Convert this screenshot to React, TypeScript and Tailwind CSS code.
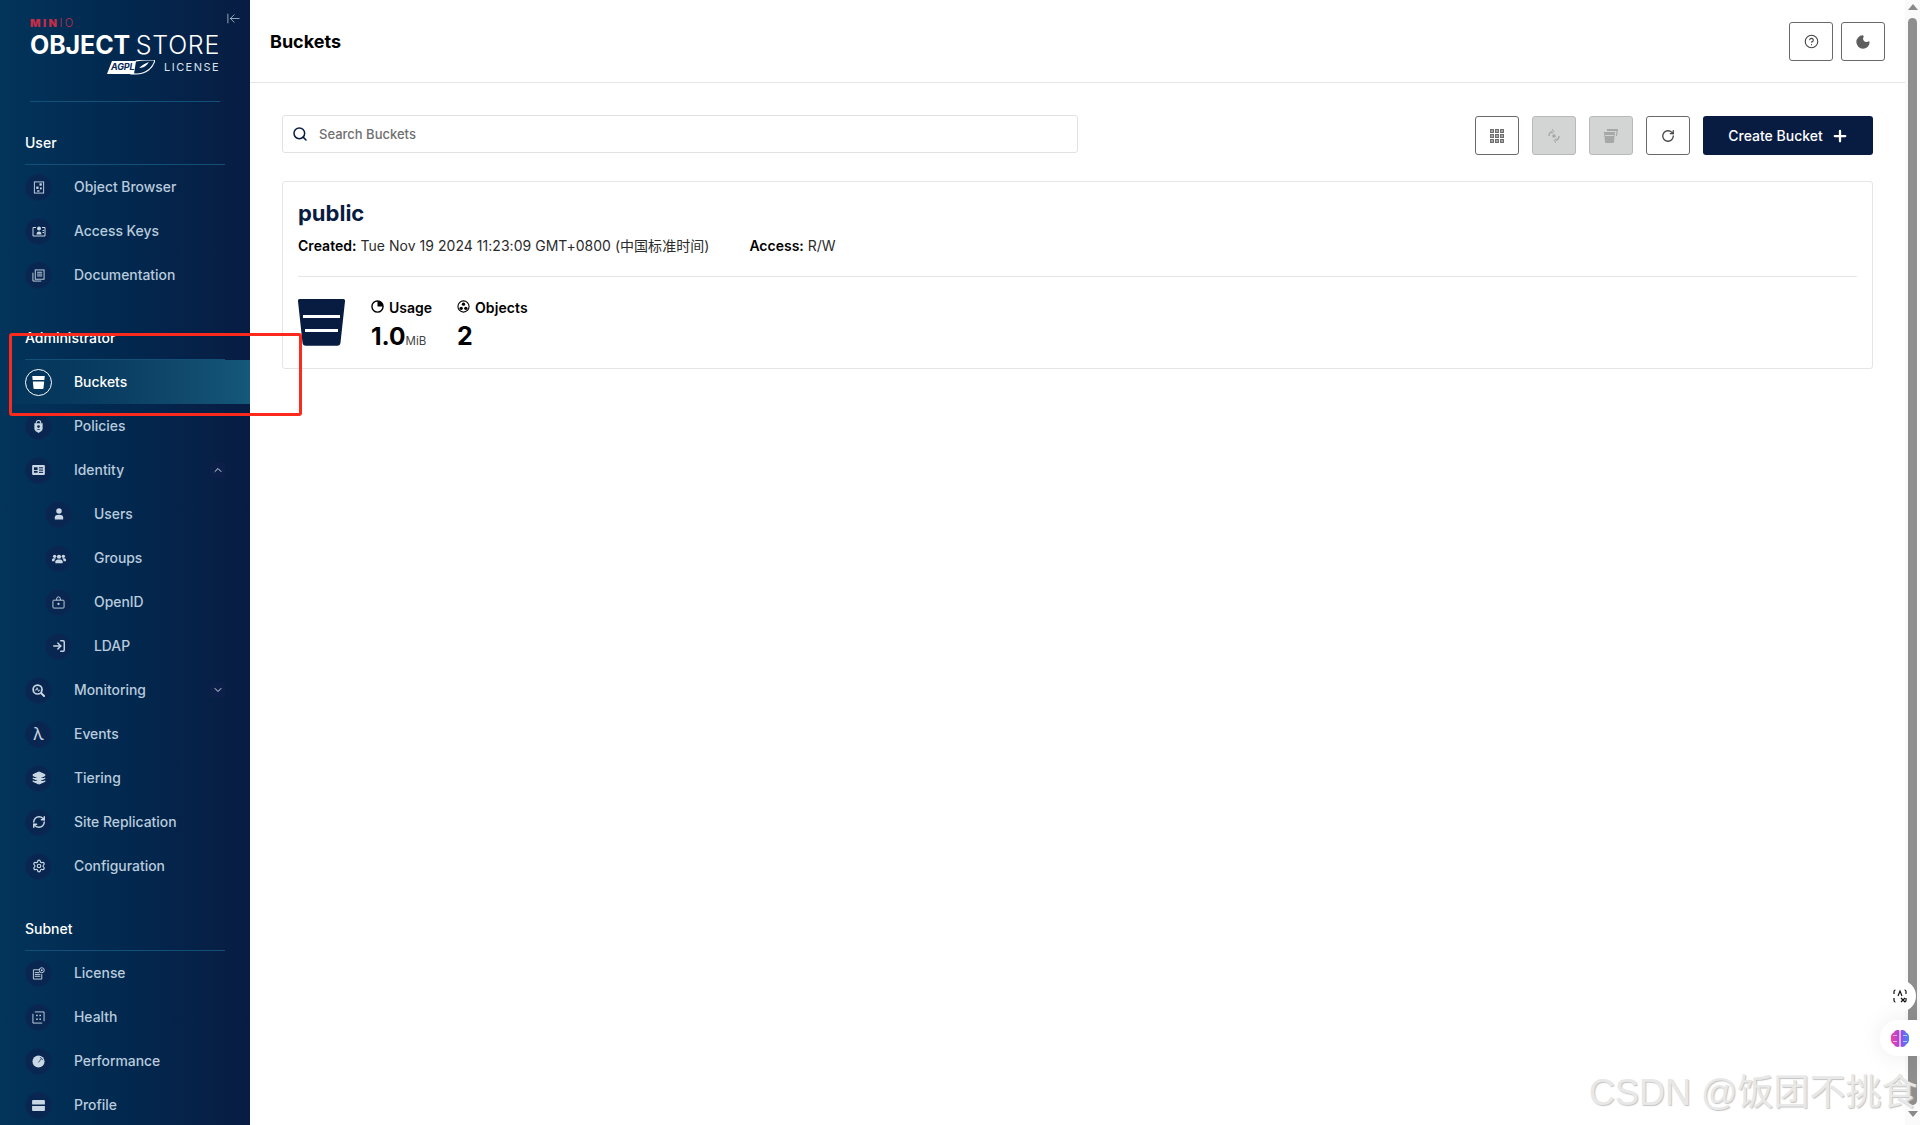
import React from 'react';
import { ArrowLeftToLine, ChevronDown, ChevronUp, CircleHelp, Layers, LogIn, Moon, Plus, RefreshCw, RotateCw, Search, Settings } from 'lucide-react';

type IconProps = { className?: string };

const ObjectBrowserIcon = ({ className }: IconProps) => (
    <svg viewBox="0 0 12 14" className={className} fill="none" stroke="currentColor" strokeWidth="1">
        <rect x="1" y="1" width="10" height="12" />
        <rect x="6.5" y="2.5" width="2.5" height="2.5" fill="currentColor" stroke="none" />
        <rect x="3" y="6" width="2.5" height="2.5" fill="currentColor" stroke="none" />
        <rect x="7" y="7" width="2" height="2" fill="currentColor" stroke="none" />
        <rect x="4" y="10" width="2.5" height="1.5" fill="currentColor" stroke="none" />
    </svg>
);

const AccessKeysIcon = ({ className }: IconProps) => (
    <svg viewBox="0 0 14 12" className={className} fill="none" stroke="currentColor" strokeWidth="1">
        <path d="M4 2.5H1v8.5h12V2.5h-3" />
        <circle cx="7" cy="3.5" r="2" fill="currentColor" stroke="none" />
        <path d="M4.5 9.5C4.5 7.5 5.5 6.5 7 6.5s2.5 1 2.5 3z" fill="currentColor" stroke="none" />
        <path d="M10.5 5.5h1.5M10.5 7.5h1.5" />
    </svg>
);

const DocumentationIcon = ({ className }: IconProps) => (
    <svg viewBox="0 0 14 14" className={className} fill="none" stroke="currentColor" strokeWidth="1">
        <rect x="3.5" y="1" width="9.5" height="10" />
        <path d="M1 4v9h9M5.5 3.5h5.5M5.5 5.5h5.5M5.5 7.5h5.5" />
    </svg>
);

const BucketIcon = ({ className }: IconProps) => (
    <svg viewBox="0 0 48 48" className={className} fill="currentColor">
        <path d="M2 0h44a2 2 0 0 1 2 2.2l-4.6 42.6a3.4 3.4 0 0 1-3.4 3H8a3.4 3.4 0 0 1-3.4-3L0 2.2A2 2 0 0 1 2 0z" />
    </svg>
);

const PoliciesIcon = ({ className }: IconProps) => (
    <svg viewBox="0 0 12 14" className={className}>
        <path d="M3.5 4V3a2.5 2.5 0 0 1 5 0v1" fill="none" stroke="currentColor" strokeWidth="1.2" />
        <path d="M1.5 3.5h9v6c0 2-2.5 3.5-4.5 4.500-2-1-4.500-2.500-4.500-4.500z" fill="currentColor" />
        <circle cx="6" cy="7" r="1.5" fill="#08264f" />
        <path d="M4 10.500c.5-1 3.500-1 4 0z" fill="#08264f" />
    </svg>
);

const IdentityIcon = ({ className }: IconProps) => (
    <svg viewBox="0 0 14 11" className={className}>
        <rect x="0" y="0" width="14" height="11" rx="1.2" fill="currentColor" />
        <rect x="2" y="2.500" width="4" height="3" fill="#08264f" />
        <rect x="2" y="6.500" width="4" height="2" fill="#08264f" />
        <rect x="7.500" y="2.500" width="4.500" height="1.200" fill="#08264f" />
        <rect x="7.500" y="5" width="4.500" height="1.200" fill="#08264f" />
        <rect x="7.500" y="7.500" width="4.500" height="1.200" fill="#08264f" />
    </svg>
);

const UserIcon = ({ className }: IconProps) => (
    <svg viewBox="0 0 12 14" className={className} fill="currentColor">
        <circle cx="6" cy="3.500" r="3.300" />
        <path d="M1 13.500V11c0-2 2-3 5-3s5 1 5 3v2.500z" />
    </svg>
);

const GroupsIcon = ({ className }: IconProps) => (
    <svg viewBox="0 0 16 12" className={className} fill="currentColor">
        <circle cx="8" cy="4" r="2.400" />
        <circle cx="3" cy="3.500" r="1.900" />
        <circle cx="13" cy="3.500" r="1.900" />
        <path d="M3.800 11.500V9.500c0-1.800 1.800-2.500 4.200-2.500s4.200.7 4.200 2.500v2z" />
        <path d="M0 9V7.500C0 6 1.500 5.800 3 5.800c.6 0 1 .1 1.400.2C3.300 6.700 2.800 7.700 2.800 9zM16 9V7.500C16 6 14.500 5.800 13 5.800c-.6 0-1 .1-1.400.2 1.100.7 1.600 1.700 1.600 3z" />
    </svg>
);

const OpenIdIcon = ({ className }: IconProps) => (
    <svg viewBox="0 0 14 14" className={className} fill="none" stroke="currentColor" strokeWidth="1">
        <path d="M5 4.500V3a2 2 0 0 1 4 0v1.500" />
        <rect x="1" y="4.500" width="12" height="8.500" rx="1" />
        <circle cx="7" cy="8.500" r="1.200" fill="currentColor" stroke="none" />
    </svg>
);

const MonitoringIcon = ({ className }: IconProps) => (
    <svg viewBox="0 0 14 14" className={className}>
        <circle cx="6" cy="6" r="4.800" fill="#08264f" stroke="currentColor" strokeWidth="1.800" />
        <path d="M3 6.500h1.500l1-2.500 1.500 4 1-1.500h1" fill="none" stroke="currentColor" strokeWidth="1" />
        <path d="M10 10l3 3" stroke="currentColor" strokeWidth="2.200" strokeLinecap="round" />
    </svg>
);

const LicenseIcon = ({ className }: IconProps) => (
    <svg viewBox="0 0 14 14" className={className} fill="none" stroke="currentColor" strokeWidth="1">
        <path d="M8 3H1.500v10h9V7.500M3 6h5M3 8h6M3 10h6" />
        <circle cx="10.500" cy="3.500" r="2.700" />
        <circle cx="10.500" cy="3.500" r="1" fill="currentColor" stroke="none" />
    </svg>
);

const HealthIcon = ({ className }: IconProps) => (
    <svg viewBox="0 0 14 14" className={className} fill="none" stroke="currentColor" strokeWidth="1">
        <path d="M3 1h10v10M1 3v10h10" />
        <rect x="4.500" y="4" width="1.600" height="1.600" fill="currentColor" stroke="none" />
        <rect x="8" y="4" width="1.600" height="1.600" fill="currentColor" stroke="none" />
        <rect x="4.500" y="8" width="1.600" height="1.600" fill="currentColor" stroke="none" />
        <rect x="8" y="8" width="1.600" height="1.600" fill="currentColor" stroke="none" />
    </svg>
);

const PerformanceIcon = ({ className }: IconProps) => (
    <svg viewBox="0 0 14 14" className={className}>
        <circle cx="7" cy="7" r="6.500" fill="currentColor" />
        <path d="M7 8l3-4M8.500 2.500a5 5 0 0 1 3 3" fill="none" stroke="#08264f" strokeWidth=".8" />
    </svg>
);

const ProfileIcon = ({ className }: IconProps) => (
    <svg viewBox="0 0 14 12" className={className} fill="currentColor">
        <path d="M1 0h12a1 1 0 0 1 1 1v4H0V1a1 1 0 0 1 1-1z" />
        <path d="M0 6.500h14V11a1 1 0 0 1-1 1H1a1 1 0 0 1-1-1z" />
    </svg>
);

const SidebarBucket = ({ className }: IconProps) => (
    <svg viewBox="0 0 14 14" className={className} fill="currentColor">
        <path d="M.3 0h13.400l-.4 4.300H.7z" />
        <path d="M.9 6h12.200l-.7 7a1 1 0 0 1-1 1H2.600a1 1 0 0 1-1-1z" />
    </svg>
);

const NavItem = ({ label, icon, sub, active, chevron }: { label: string; icon: React.ReactNode; sub?: boolean; active?: boolean; chevron?: 'up' | 'down' }) => (
    <div className={`relative flex h-[44px] items-center ${sub ? 'pl-[45px]' : 'pl-[25px]'} pr-[25px] ${active ? 'bg-gradient-to-r from-transparent to-[#14587a] text-white' : 'text-[#b9cbdd]'}`}>
        <div className={`flex h-[27px] w-[27px] shrink-0 items-center justify-center rounded-full ${active ? 'border border-white text-white' : 'border border-[#0a2a58] bg-[#08264f] text-[#c9d6e3]'}`}>
            {icon}
        </div>
        <span className="ml-[22px] text-[13.9px] font-medium leading-5">{label}</span>
        {chevron && (
            <div className="ml-auto flex h-[15px] w-[15px] items-center justify-center rounded-[2px] bg-[#0b1f49] text-[#d5e0ea]">
                {chevron === 'up' ? <ChevronUp className="h-[12px] w-[12px]" /> : <ChevronDown className="h-[12px] w-[12px]" />}
            </div>
        )}
    </div>
);

const SectionHeading = ({ title }: { title: string }) => (
    <div className="mx-[25px] flex h-[43px] items-center border-b border-[#125077] pb-px text-[14px] font-medium text-white">
        {title}
    </div>
);

const Sidebar = () => (
    <aside className="h-[1125px] w-[250px] shrink-0 overflow-hidden bg-gradient-to-r from-[#03345a] via-[#02284f] to-[#081c42]">
        <div className="relative h-[102px] px-[30px]">
            <div className="pt-[17px] text-[11px] font-black leading-[12px] tracking-[2.4px] text-[#c72c48]">
                MIN<span className="font-light">IO</span>
            </div>
            <div className="flex justify-between pt-[2px] text-[25px] leading-[29px] text-white">
                <span className="font-bold tracking-[-0.1px]">OBJECT</span>
                <span className="font-light tracking-[0.7px]">STORE</span>
            </div>
            <div className="-mt-[1px] flex items-center justify-end">
                <div className="relative h-[15px] w-[48px]">
                    <svg viewBox="0 0 48 15" className="h-[15px] w-[48px]">
                        <path d="M5 1h24l-2 13H0z" fill="#fff" />
                        <path d="M29 1c7-2 15-1 19-1-2 8-9 14-19 14-6 0-7-1-7-1 1-6 3-10 7-12z" fill="none" stroke="#fff" strokeWidth="1.200" />
                        <path d="M32 8c3-3 7-5 10-6-2 3-5 6-10 6z" fill="#fff" />
                    </svg>
                    <span className="absolute left-[4px] top-[1px] text-[9px] font-bold italic leading-[11px] tracking-[-0.2px] text-[#0a2a58]">AGPL</span>
                </div>
                <span className="ml-[9px] text-[11px] font-normal leading-4 tracking-[1.45px] text-[#dbe4ec]">LICENSE</span>
            </div>
            <ArrowLeftToLine className="absolute left-[226px] top-[11px] h-[15px] w-[15px] text-[#b9cbdd]" strokeWidth={1.25} />
            <div className="absolute bottom-0 left-[30px] right-[30px] h-px bg-[#125077]" />
        </div>

        <div className="pt-[20px]">
            <SectionHeading title="User" />
            <NavItem label="Object Browser" icon={<ObjectBrowserIcon className="h-[13px] w-[12px]" />} />
            <NavItem label="Access Keys" icon={<AccessKeysIcon className="h-[12px] w-[14px]" />} />
            <NavItem label="Documentation" icon={<DocumentationIcon className="h-[13px] w-[13px]" />} />
        </div>

        <div className="pt-[20px]">
            <SectionHeading title="Administrator" />
            <NavItem label="Buckets" active icon={<SidebarBucket className="h-[13px] w-[13px]" />} />
            <NavItem label="Policies" icon={<PoliciesIcon className="h-[13px] w-[11px]" />} />
            <NavItem label="Identity" chevron="up" icon={<IdentityIcon className="h-[10px] w-[13px]" />} />
            <NavItem label="Users" sub icon={<UserIcon className="h-[12px] w-[10px]" />} />
            <NavItem label="Groups" sub icon={<GroupsIcon className="h-[11px] w-[14px]" />} />
            <NavItem label="OpenID" sub icon={<OpenIdIcon className="h-[13px] w-[13px]" />} />
            <NavItem label="LDAP" sub icon={<LogIn className="h-[14px] w-[14px]" strokeWidth={2.5} />} />
            <NavItem label="Monitoring" chevron="down" icon={<MonitoringIcon className="h-[13px] w-[13px]" />} />
            <NavItem label="Events" icon={<span className="text-[17px] leading-none">λ</span>} />
            <NavItem label="Tiering" icon={<Layers className="h-[14px] w-[14px]" fill="currentColor" />} />
            <NavItem label="Site Replication" icon={<RefreshCw className="h-[14px] w-[14px]" strokeWidth={2.5} />} />
            <NavItem label="Configuration" icon={<Settings className="h-[14px] w-[14px]" />} />
        </div>

        <div className="pt-[20px]">
            <SectionHeading title="Subnet" />
            <NavItem label="License" icon={<LicenseIcon className="h-[13px] w-[13px]" />} />
            <NavItem label="Health" icon={<HealthIcon className="h-[13px] w-[13px]" />} />
            <NavItem label="Performance" icon={<PerformanceIcon className="h-[13px] w-[13px]" />} />
            <NavItem label="Profile" icon={<ProfileIcon className="h-[11px] w-[13px]" />} />
        </div>
    </aside>
);

const IconButton = ({ children, disabled }: { children: React.ReactNode; disabled?: boolean }) => (
    <button
        type="button"
        className={`flex h-[39px] w-[44px] items-center justify-center rounded-[3px] border ${disabled ? 'border-[#b8baba] bg-[#d3d5d5] text-[#a6a8a8]' : 'border-[#696969] bg-white text-[#5e5e5e]'}`}
    >
        {children}
    </button>
);

const GridIcon = () => (
    <svg viewBox="0 0 14 14" className="h-[14px] w-[14px]" fill="none" stroke="#6f6f6f" strokeWidth="1">
        {[0, 5, 10].map((y) =>
            [0, 5, 10].map((x) => <rect key={`${x}-${y}`} x={x + 0.5} y={y + 0.5} width="3" height="3" fill="#a5a5a5" />)
        )}
    </svg>
);

const SyncIcon = () => (
    <svg viewBox="0 0 14 14" className="h-[14px] w-[14px]" fill="none" stroke="currentColor" strokeWidth="1.400">
        <path d="M2 7c0-2.500 1.500-4 3.500-4.500M12 7c0 2.500-1.500 4-3.500 4.500" />
        <path d="M5 0l2 2.500L5 4.500M9 9.500l-2 2 2 2.500" strokeWidth="1" />
        <circle cx="7" cy="7" r="1.800" fill="currentColor" stroke="none" />
    </svg>
);

const MultiBucketIcon = () => (
    <svg viewBox="0 0 14 14" className="h-[14px] w-[14px]" fill="currentColor">
        <path d="M3 0h11l-1 7H12l.5-5H3z" />
        <path d="M0 3h11l-1 10a1 1 0 0 1-1 1H2a1 1 0 0 1-1-1zM1.200 6l.1 1h8.400l.1-1z" fillRule="evenodd" />
    </svg>
);

const Header = () => (
    <header className="flex h-[83px] items-start justify-between border-b border-[#e5e5e5] pl-[20px] pr-[20px] pt-[22px]">
        <h1 className="mt-[8px] text-[18px] font-bold leading-6 text-[#000]">Buckets</h1>
        <div className="flex gap-[8px]">
            <IconButton><CircleHelp className="h-[15px] w-[15px] text-[#444]" strokeWidth={1.75} /></IconButton>
            <IconButton><Moon className="h-[16px] w-[16px]" fill="currentColor" /></IconButton>
        </div>
    </header>
);

const Toolbar = () => (
    <div className="flex items-start justify-between">
        <div className="flex h-[38px] w-[796px] items-center rounded-[3px] border border-[#e2e2e2] bg-white pl-[9px]">
            <Search className="h-[16px] w-[16px] text-[#081c42]" strokeWidth={2.25} />
            <span className="ml-[11px] mt-px text-[13px] font-medium text-[#6f6f6f]">Search Buckets</span>
        </div>
        <div className="mt-px flex gap-[13px]">
            <IconButton><GridIcon /></IconButton>
            <IconButton disabled><SyncIcon /></IconButton>
            <IconButton disabled><MultiBucketIcon /></IconButton>
            <IconButton><RotateCw className="h-[14px] w-[14px] text-[#444]" strokeWidth={2.25} /></IconButton>
            <button type="button" className="flex h-[39px] w-[170px] items-center justify-center rounded-[3px] bg-[#081c42] pl-px text-[14px] font-medium text-white">
                Create Bucket
                <Plus className="ml-[8px] h-[18px] w-[18px]" strokeWidth={3} />
            </button>
        </div>
    </div>
);

const BucketCard = () => (
    <div className="mt-[26px] h-[188px] rounded-[3px] border border-[#e5e5e5] px-[15px]">
        <div className="mt-[15px] text-[22px] font-bold leading-8 text-[#081c42]">public</div>
        <div className="mt-[7px] flex text-[14px] leading-5 text-[#2b2b2b] [font-family:Inter,'Noto_Sans_CJK_SC',sans-serif]">
            <span className="tracking-[0.03px]">
                <b className="font-semibold text-black">Created:</b> Tue Nov 19 2024 11:23:09 GMT+0800 (中国标准时间)
            </span>
            <span className="ml-[40px]">
                <b className="font-semibold text-black">Access:</b> R/W
            </span>
        </div>
        <div className="mt-[20px] border-t border-[#e5e5e5]" />
        <div className="mt-[22px] flex items-start">
            <div className="relative h-[47px] w-[47px] text-[#081c42]">
                <BucketIcon className="h-[47px] w-[47px]" />
                <div className="absolute left-[5px] right-[5px] top-[16px] h-[3px] bg-white" />
                <div className="absolute left-[7px] right-[7px] top-[30px] h-[3px] bg-white" />
            </div>
            <div className="ml-[26px] w-[86px] -mt-[1px]">
                <div className="flex h-5 items-center text-[14px] font-semibold leading-5 text-black">
                    <svg viewBox="0 0 14 14" className="mr-[5px] -mt-[3px] h-[13px] w-[13px]">
                        <circle cx="7" cy="7" r="6" fill="none" stroke="#000" strokeWidth="1.500" />
                        <path d="M7 7V1a6 6 0 0 1 6 6z" fill="#000" />
                    </svg>
                    Usage
                </div>
                <div className="mt-[2px] flex items-baseline font-bold text-black">
                    <span className="text-[24.5px] leading-8">1.0</span>
                    <span className="text-[11.5px] font-normal text-[#444]">MiB</span>
                </div>
            </div>
            <div className="-mt-[1px]">
                <div className="flex h-5 items-center text-[14px] font-semibold leading-5 text-black">
                    <svg viewBox="0 0 14 14" className="mr-[5px] -mt-[3px] h-[13px] w-[13px]">
                        <circle cx="7" cy="7" r="6" fill="none" stroke="#000" strokeWidth="1.200" />
                        <circle cx="7" cy="4.500" r="1.800" fill="#000" />
                        <circle cx="4.500" cy="9" r="1.800" fill="#000" />
                        <circle cx="9.500" cy="9" r="1.800" fill="#000" />
                    </svg>
                    <span className="tracking-[0.1px]">Objects</span>
                </div>
                <div className="mt-[2px] text-[25px] font-bold leading-8 text-black">2</div>
            </div>
        </div>
    </div>
);

const Scrollbar = () => (
    <div className="flex h-[1125px] w-[15px] shrink-0 flex-col items-center bg-[#fafafa] pt-[4px]">
        <div className="h-0 w-0 border-x-[5px] border-b-[6px] border-x-transparent border-b-[#8a8a8a]" />
        <div className="mt-[8px] h-[1087px] w-[9px] rounded-[5px] bg-[#8e8e8e]" />
        <div className="mt-[6px] h-0 w-0 border-x-[5px] border-t-[6px] border-x-transparent border-t-[#8a8a8a]" />
    </div>
);

const App = () => (
    <div className="relative flex h-[1125px] w-[1920px] overflow-hidden bg-white font-['Inter','Noto_Sans_CJK_SC',sans-serif]">
        <Sidebar />
        <main className="min-w-0 flex-1">
            <Header />
            <div className="pl-[32px] pr-[32px] pt-[32px]">
                <Toolbar />
                <BucketCard />
            </div>
        </main>
        <Scrollbar />

        {/* red annotation box drawn on top of the screenshot */}
        <div className="pointer-events-none absolute left-[9px] top-[333px] h-[83px] w-[293px] rounded-[3px] border-[3px] border-[#fb2a1d]" />

        {/* floating browser-extension buttons */}
        <div className="absolute left-[1884px] top-[980px] flex h-[32px] w-[32px] items-center justify-center rounded-full bg-white">
            <svg viewBox="0 0 14 14" className="h-[14px] w-[14px]" fill="none" stroke="#111" strokeWidth="1.200">
                <path d="M1 5V2.500A1.500 1.500 0 0 1 2.500 1M11.500 1A1.500 1.500 0 0 1 13 2.500V5M13 9v2.500a1.500 1.500 0 0 1-1.500 1.500M2.500 13A1.500 1.500 0 0 1 1 11.500V9" />
                <path d="M5 7l2-5 2 5M8 9l4 4M12 9l-4 4" />
            </svg>
        </div>
        <div className="absolute left-[1880px] top-[1020px] flex h-[36px] w-[44px] items-center rounded-l-full bg-white pl-[10px] shadow-[0_0_24px_rgba(0,0,0,0.08)]">
            <svg viewBox="0 0 20 18" className="h-[19px] w-[20px]">
                <defs>
                    <linearGradient id="brain" x1="0" x2="1" y1="0" y2="0">
                        <stop offset="0" stopColor="#f8429a" />
                        <stop offset="0.5" stopColor="#a144e8" />
                        <stop offset="1" stopColor="#3f8cf7" />
                    </linearGradient>
                </defs>
                <path d="M9.400 1C7 0 4.500 1 4 3 2 3.500.5 6 1 9c-.5 3 1.500 5.500 3 6 .5 2 3.500 3 5.400 2zM10.600 1C13 0 15.500 1 16 3c2 .5 3.500 3 3 6 .5 3-1.500 5.500-3 6-.5 2-3.500 3-5.400 2z" fill="url(#brain)" />
                <path d="M3 6h4M3 12h4M13 6h4M13 12h4" stroke="#fff" strokeWidth=".6" />
            </svg>
        </div>
        <div className="absolute left-[1589px] top-[1071px] whitespace-nowrap font-['Liberation_Sans','Noto_Sans_CJK_SC',sans-serif] text-[36px] leading-[44px] text-[#e8e8e8] [text-shadow:1px_1px_1px_#c4c4c4]">
            CSDN @饭团不挑食
        </div>
    </div>
);

export default App;
